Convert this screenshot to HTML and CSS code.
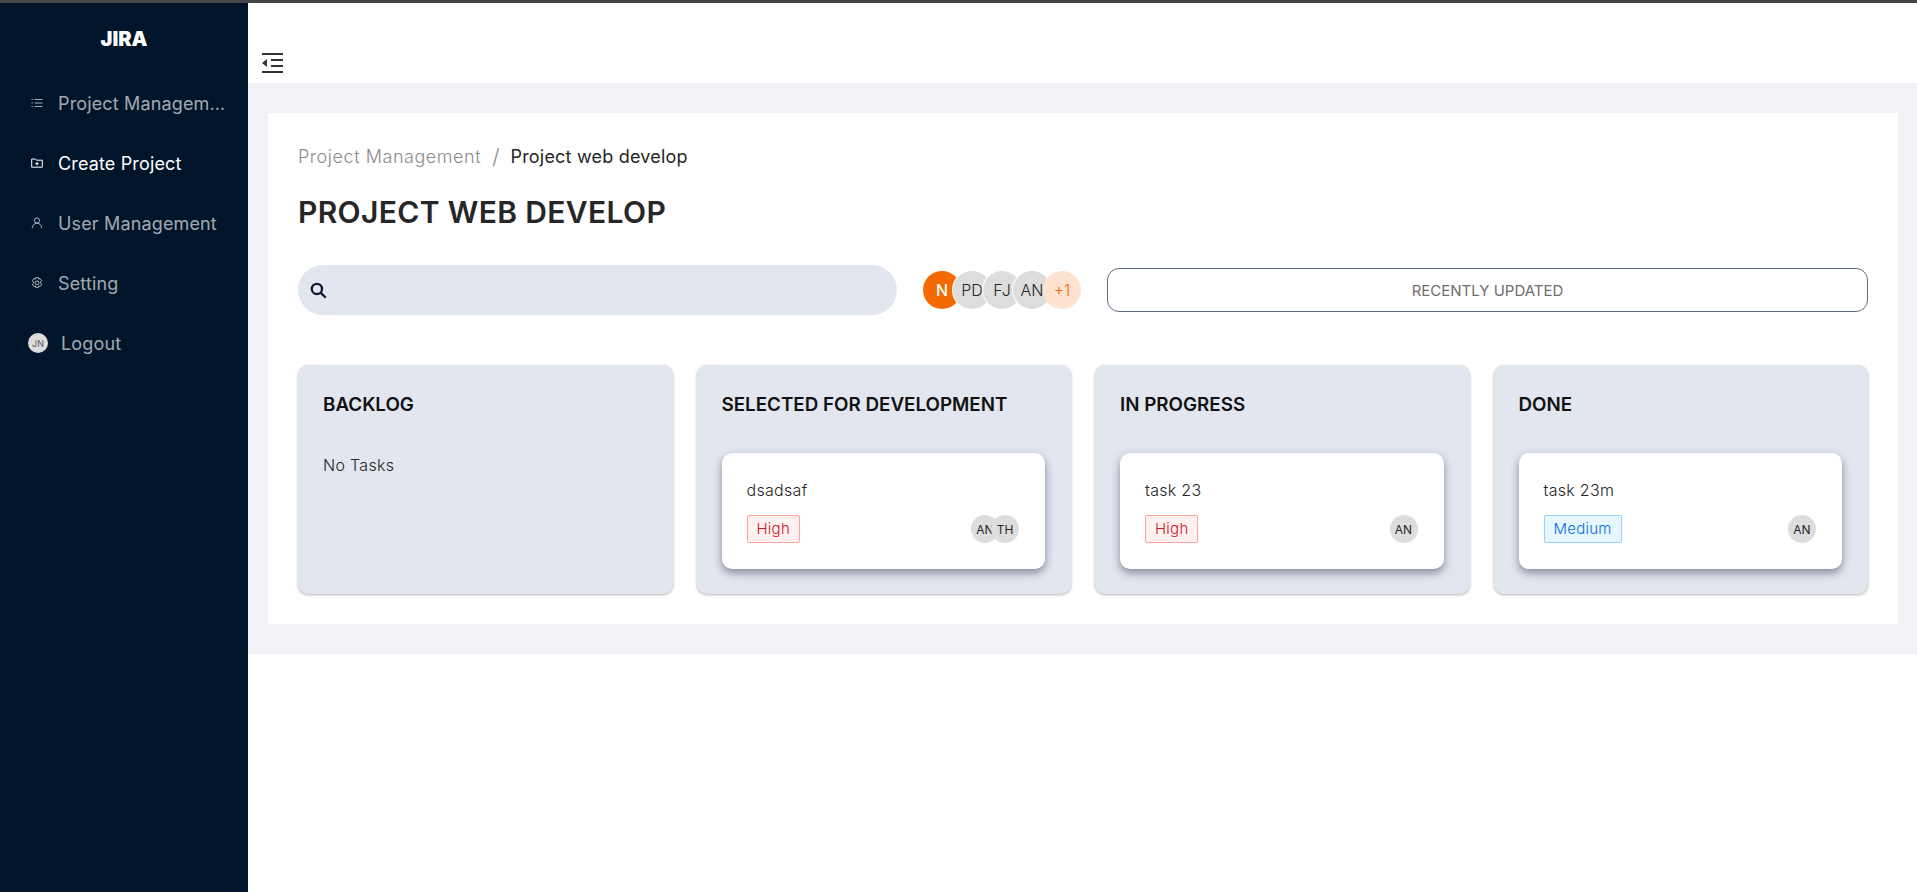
FILE: index.html
```html
<!DOCTYPE html>
<html lang="en">
<head>
<meta charset="utf-8">
<title>Jira</title>
<link rel="stylesheet" href="styles.css">
</head>
<body>
<div class="topline"></div>
<div class="app">
  <aside class="sidebar">
    <div class="logo">JIRA</div>
    <nav class="menu">
      <a class="item"><svg class="ic" viewBox="0 0 12 12"><path d="M3.5 2.500h8M3.500 6h8M3.500 9.500h8M.5 2.500h1.300M.5 6h1.300M.5 9.500h1.300"/></svg><span class="label">Project Management</span></a>
      <a class="item active"><svg class="ic" viewBox="0 0 12 12"><path d="M.7 2h3.600l1.100 1.200h5.900v7H.7zM6 5v3.400M4.300 6.700h3.400"/></svg><span class="label">Create Project</span></a>
      <a class="item"><svg class="ic" viewBox="0 0 12 12"><circle cx="6" cy="3.500" r="2.600"/><path d="M1.200 11.300c.3-3 2.200-5.200 4.800-5.200s4.500 2.200 4.800 5.200"/></svg><span class="label">User Management</span></a>
      <a class="item"><svg class="ic" viewBox="0 0 12 12"><path d="M4.700.6h2.600l.4 1.500 1.500-.5 1.400 2.300-1.100 1.100.1 1 1.100 1.100-1.400 2.300-1.500-.5-.4 1.500H4.700l-.4-1.500-1.500.5L1.400 7.100l1.100-1.100v-1L1.400 3.900l1.400-2.300 1.500.5z"/><circle cx="6" cy="5.800" r="1.900"/></svg><span class="label">Setting</span></a>
      <a class="item logout"><span class="mini">JN</span><span class="label">Logout</span></a>
    </nav>
  </aside>
  <main class="main">
    <header class="header">
      <svg class="outdent" viewBox="0 0 22 20"><path class="bars" d="M0 1h21M9 7h12M9 13h12M0 19h21"/><path class="tri" d="M0 10l5-4v8z"/></svg>
    </header>
    <div class="content">
      <section class="panel">
        <div class="crumbs"><span class="crumb-link">Project Management</span><span class="sep">/</span><span class="crumb-cur">Project web develop</span></div>
        <h1 class="title">PROJECT WEB DEVELOP</h1>
        <div class="toolbar">
          <div class="search"><svg class="search-ic" viewBox="0 0 16 16"><circle cx="6.500" cy="6.500" r="4.800"/><path d="M10 10l4.800 4.800"/></svg></div>
          <div class="avatars">
            <span class="av av-n">N</span><span class="av">PD</span><span class="av">FJ</span><span class="av">AN</span><span class="av av-more">+1</span>
          </div>
          <button class="recent">RECENTLY UPDATED</button>
        </div>
        <div class="board">
          <div class="col">
            <h2 class="col-title">BACKLOG</h2>
            <p class="empty">No Tasks</p>
          </div>
          <div class="col">
            <h2 class="col-title">SELECTED FOR DEVELOPMENT</h2>
            <div class="task">
              <div class="task-name">dsadsaf</div>
              <div class="task-foot"><span class="tag high">High</span><span class="task-avs"><span class="av-s">AN</span><span class="av-s">TH</span></span></div>
            </div>
          </div>
          <div class="col">
            <h2 class="col-title">IN PROGRESS</h2>
            <div class="task">
              <div class="task-name">task 23</div>
              <div class="task-foot"><span class="tag high">High</span><span class="task-avs"><span class="av-s">AN</span></span></div>
            </div>
          </div>
          <div class="col">
            <h2 class="col-title">DONE</h2>
            <div class="task">
              <div class="task-name">task 23m</div>
              <div class="task-foot"><span class="tag medium">Medium</span><span class="task-avs"><span class="av-s">AN</span></span></div>
            </div>
          </div>
        </div>
      </section>
    </div>
  </main>
</div>
</body>
</html>
```
FILE: styles.css
```css
* { box-sizing: border-box; }
html, body { margin: 0; height: 100%; }
body {
  font-family: Inter, "Open Sans", "Liberation Sans", sans-serif;
  color: #262626;
  background: #fff;
  overflow: hidden;
  display: flex;
  flex-direction: column;
}
.topline { height: 3px; background: #454545; flex: none; }
.app { flex: 1; display: flex; min-height: 0; }

.sidebar { width: 248px; flex: none; background: #001529; color: #fff; }
.logo { height: 70px; padding-top: 24px; text-align: center; font-size: 20px; line-height: 24px; font-weight: 900; }
.menu { display: flex; flex-direction: column; }
.item { height: 60px; display: flex; align-items: center; padding-left: 31px; color: rgba(255,255,255,.65); font-size: 18px; letter-spacing: .15px; }
.item.active { color: #fff; }
.ic { width: 12px; height: 12px; flex: none; margin-right: 15px; fill: none; stroke: currentColor; stroke-width: 1; }
.label { width: 168px; white-space: nowrap; overflow: hidden; text-overflow: ellipsis; }
.logout { padding-left: 28px; }
.mini { width: 20px; height: 20px; flex: none; border-radius: 50%; margin-right: 13px; background: #ddd; color: #555; font-size: 9px; letter-spacing: 0; display: flex; align-items: center; justify-content: center; }

.main { flex: 1; min-width: 0; }
.header { height: 80px; background: #fff; padding: 50px 0 0 14px; }
.outdent { display: block; width: 22px; height: 20px; }
.bars { fill: none; stroke: #333; stroke-width: 2; }
.tri { fill: #333; }
.content { background: #f0f2f5; padding: 30px 19px 30px 20px; }
.panel { background: #fff; padding: 30px; height: 511px; }

.crumbs { display: flex; align-items: center; height: 26px; font-size: 18px; font-weight: 300; }
.crumb-link { color: #8c8c8c; letter-spacing: .55px; }
.sep { color: #8c8c8c; margin: 0 11px; font-size: 21px; }
.crumb-cur { color: #262626; font-weight: 400; letter-spacing: .2px; }
.title { margin: 21px 0 0; font-size: 30px; line-height: 44px; font-weight: 600; color: #262626; letter-spacing: .35px; }

.toolbar { display: flex; align-items: center; margin-top: 31px; height: 50px; }
.search { width: 599px; height: 50px; border-radius: 25px; background: #e2e6ef; display: flex; align-items: center; padding-left: 12px; flex: none; }
.search-ic { width: 17px; height: 17px; fill: none; stroke: #0e1a33; stroke-width: 2.200; }
.avatars { display: flex; margin-left: 26px; flex: none; }
.av { width: 38px; height: 38px; border-radius: 50%; background: #ddd; color: #262626; font-size: 16px; font-weight: 300; display: flex; align-items: center; justify-content: center; margin-left: -8px; box-shadow: 0 0 0 1px #fff; }
.av:first-child { margin-left: 0; }
.av-n { background: #f56a00; color: #fff; font-weight: 500; box-shadow: none; }
.av-more { background: #fde3cf; color: #f56a00; box-shadow: none; }
.recent { flex: 1; margin-left: 26px; height: 44px; border: 1px solid #5f6f80; border-radius: 12px; background: #fff; color: #6e6e6e; font: 400 15px Inter, "Liberation Sans", sans-serif; }

.board { display: grid; grid-template-columns: repeat(4, 1fr); gap: 24px; margin-top: 50px; }
.col { height: 229px; background: #e2e6ef; border-radius: 10px; padding: 25px 26px 25px 25px; box-shadow: 0 1px 3px rgba(0,0,0,.3); }
.col-title { margin: 0; font-size: 18.800px; line-height: 30px; font-weight: 600; color: #111; white-space: nowrap; }
.empty { margin: 33px 0 0; font-size: 16px; line-height: 24px; font-weight: 300; color: #262626; letter-spacing: .3px; }
.task { margin-top: 33px; height: 116px; background: #fff; border-radius: 10px; padding: 25px 26px 26px 25px; box-shadow: 0 4px 8px rgba(40,48,70,.5); }
.task-name { font-size: 16px; line-height: 24px; font-weight: 300; color: #262626; letter-spacing: .3px; }
.task-foot { display: flex; align-items: center; justify-content: space-between; margin-top: 13px; height: 28px; }
.tag { height: 28px; padding: 0 9px; border: 1px solid; border-radius: 2px; font-size: 15px; font-weight: 300; line-height: 26px; letter-spacing: .25px; }
.high { color: #cf1322; background: #fff1f0; border-color: #ffa39e; }
.medium { color: #096dd9; background: #e6f7ff; border-color: #91d5ff; }
.task-avs { display: flex; }
.av-s { width: 28px; height: 28px; border-radius: 50%; background: #ddd; color: #262626; font-size: 12px; font-weight: 400; display: flex; align-items: center; justify-content: center; margin-left: -8px; overflow: hidden; }
.av-s:first-child { margin-left: 0; }
```
